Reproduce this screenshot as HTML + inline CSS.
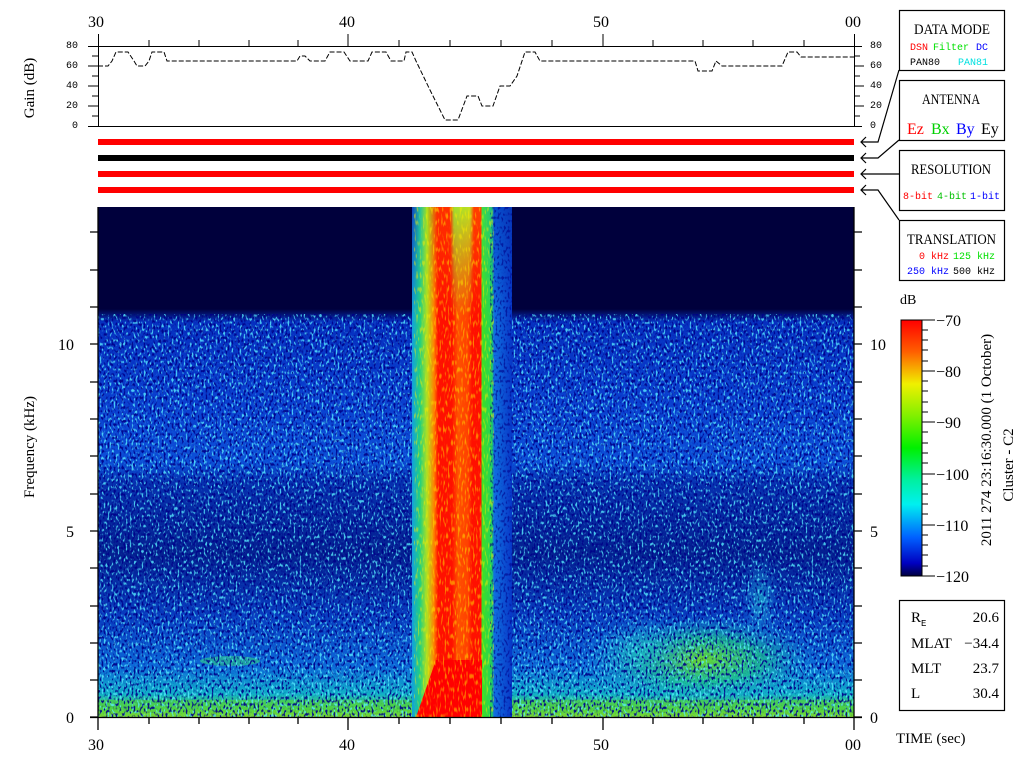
<!DOCTYPE html>
<html><head><meta charset="utf-8"><style>
html,body{margin:0;padding:0;background:#fff;width:1024px;height:768px;overflow:hidden}
svg{display:block}
text{font-family:"Liberation Serif","DejaVu Serif",serif}
.m text, text.m{font-family:"Liberation Mono","DejaVu Sans Mono",monospace}
</style></head><body>
<svg width="1024" height="768" viewBox="0 0 1024 768" xmlns="http://www.w3.org/2000/svg">
<defs>
<linearGradient id="bg" x1="0" y1="207" x2="0" y2="717" gradientUnits="userSpaceOnUse">
<stop offset="0" stop-color="#00003c"/>
<stop offset="0.2" stop-color="#00003c"/>
<stop offset="0.225" stop-color="#0630c0"/>
<stop offset="0.38" stop-color="#0a40d0"/>
<stop offset="0.50" stop-color="#0c50d8"/>
<stop offset="0.54" stop-color="#0630b0"/>
<stop offset="0.68" stop-color="#042090"/>
<stop offset="0.80" stop-color="#083cc0"/>
<stop offset="0.90" stop-color="#0c68d8"/>
<stop offset="0.955" stop-color="#10b0c8"/>
<stop offset="0.985" stop-color="#50d840"/>
<stop offset="1" stop-color="#c0e020"/>
</linearGradient>
<linearGradient id="burst" x1="412" y1="0" x2="512" y2="0" gradientUnits="userSpaceOnUse">
<stop offset="0" stop-color="#10a0e0"/>
<stop offset="0.08" stop-color="#20d080"/>
<stop offset="0.15" stop-color="#b0e020"/>
<stop offset="0.22" stop-color="#ff8000"/>
<stop offset="0.26" stop-color="#ff1000"/>
<stop offset="0.40" stop-color="#ff1000"/>
<stop offset="0.46" stop-color="#ff5000"/>
<stop offset="0.56" stop-color="#ff4000"/>
<stop offset="0.60" stop-color="#ff1000"/>
<stop offset="0.69" stop-color="#ff1000"/>
<stop offset="0.70" stop-color="#40e020"/>
<stop offset="0.80" stop-color="#20d060"/>
<stop offset="0.82" stop-color="#1070e0"/>
<stop offset="1" stop-color="#0838c8"/>
</linearGradient>
<linearGradient id="bursttop" x1="412" y1="0" x2="512" y2="0" gradientUnits="userSpaceOnUse">
<stop offset="0" stop-color="#1040c0"/>
<stop offset="0.08" stop-color="#20c0a0"/>
<stop offset="0.15" stop-color="#a0e020"/>
<stop offset="0.25" stop-color="#ff3000"/>
<stop offset="0.38" stop-color="#ff3000"/>
<stop offset="0.42" stop-color="#a0e030"/>
<stop offset="0.58" stop-color="#c0e020"/>
<stop offset="0.62" stop-color="#ff4000"/>
<stop offset="0.69" stop-color="#ff4000"/>
<stop offset="0.70" stop-color="#40e040"/>
<stop offset="0.80" stop-color="#20c080"/>
<stop offset="0.82" stop-color="#0850d0"/>
<stop offset="1" stop-color="#0838b8"/>
</linearGradient>
<linearGradient id="bv" x1="0" y1="207" x2="0" y2="317" gradientUnits="userSpaceOnUse">
<stop offset="0" stop-color="#fff" stop-opacity="0"/>
<stop offset="1" stop-color="#fff" stop-opacity="1"/>
</linearGradient>
<mask id="bm"><rect x="412" y="207" width="100" height="110" fill="url(#bv)"/></mask>
<radialGradient id="blob" cx="0.5" cy="0.5" r="0.5">
<stop offset="0" stop-color="#70e020" stop-opacity="0.95"/>
<stop offset="0.5" stop-color="#20d080" stop-opacity="0.7"/>
<stop offset="1" stop-color="#10a0e0" stop-opacity="0"/>
</radialGradient>
<radialGradient id="blob2" cx="0.5" cy="0.5" r="0.5">
<stop offset="0" stop-color="#20c0d0" stop-opacity="0.7"/>
<stop offset="1" stop-color="#1070e0" stop-opacity="0"/>
</radialGradient>
<linearGradient id="cb" x1="0" y1="320" x2="0" y2="576" gradientUnits="userSpaceOnUse">
<stop offset="0" stop-color="#ff0000"/>
<stop offset="0.125" stop-color="#ff6000"/>
<stop offset="0.25" stop-color="#f0f000"/>
<stop offset="0.375" stop-color="#80f000"/>
<stop offset="0.5" stop-color="#00f000"/>
<stop offset="0.625" stop-color="#00f0a0"/>
<stop offset="0.72" stop-color="#00f0f0"/>
<stop offset="0.85" stop-color="#0060ff"/>
<stop offset="0.95" stop-color="#0000c0"/>
<stop offset="1" stop-color="#000040"/>
</linearGradient>
<filter id="spk" x="0" y="0" width="100%" height="100%">
<feTurbulence type="fractalNoise" baseFrequency="0.5 0.28" numOctaves="1" seed="3"/>
<feColorMatrix type="matrix" values="0 0 0 0 0.1  0 0 0 0 0.85  0 0 0 0 1  6 0 0 0 -3.2"/>
</filter>
<filter id="dspk" x="0" y="0" width="100%" height="100%">
<feTurbulence type="fractalNoise" baseFrequency="0.5 0.3" numOctaves="1" seed="9"/>
<feColorMatrix type="matrix" values="0 0 0 0 0  0 0 0 0 0  0 0 0 0 0.25  0 6 0 0 -3.1"/>
</filter>
<filter id="yspk" x="0" y="0" width="100%" height="100%">
<feTurbulence type="fractalNoise" baseFrequency="0.6 0.15" numOctaves="1" seed="5"/>
<feColorMatrix type="matrix" values="0 0 0 0 1  0 0 0 0 0.85  0 0 0 0 0  6 0 0 0 -3.2"/>
</filter>
<clipPath id="noiseclip"><rect x="98" y="314" width="756" height="403"/><rect x="490" y="207" width="22" height="110"/></clipPath>
</defs>

<!-- spectrogram -->
<rect x="98" y="207" width="756" height="510" fill="url(#bg)"/>
<ellipse cx="700" cy="660" rx="120" ry="45" fill="url(#blob)"/>
<ellipse cx="640" cy="650" rx="60" ry="40" fill="url(#blob2)"/>
<ellipse cx="760" cy="600" rx="20" ry="50" fill="url(#blob2)"/>
<ellipse cx="230" cy="661" rx="30" ry="5" fill="#30d080" opacity="0.6"/>
<rect x="98" y="700" width="756" height="17" fill="#50d040" opacity="0.6"/>
<g clip-path="url(#noiseclip)">
<rect x="98" y="207" width="756" height="510" filter="url(#spk)" opacity="0.8"/>
<rect x="98" y="207" width="756" height="510" filter="url(#dspk)" opacity="0.9"/>
</g>
<rect x="412" y="207" width="100" height="110" fill="url(#bursttop)"/>
<rect x="412" y="317" width="100" height="400" fill="url(#burst)"/>
<rect x="412" y="207" width="100" height="110" fill="url(#burst)" mask="url(#bm)"/>
<polygon points="436,660 482,660 482,717 416,717" fill="#ff0000"/>
<rect x="414" y="207" width="80" height="510" filter="url(#yspk)" opacity="0.5"/>
<rect x="490" y="207" width="22" height="510" filter="url(#dspk)" opacity="0.6"/>

<!-- spectrogram axes -->
<g stroke="#000" stroke-width="1.3" fill="none">
<line x1="98" y1="207" x2="98" y2="718"/>
<line x1="854" y1="207" x2="854" y2="718"/>
<line x1="90" y1="717.5" x2="862" y2="717.5"/>
<path d="M90 717H98M90 680H98M90 643H98M90 606H98M90 568H98M90 531H98M90 494H98M90 456H98M90 419H98M90 382H98M90 344H98M90 307H98M90 270H98M90 232H98"/>
<path d="M854 717H862M854 680H862M854 643H862M854 606H862M854 568H862M854 531H862M854 494H862M854 456H862M854 419H862M854 382H862M854 344H862M854 307H862M854 270H862M854 232H862"/>
<path d="M98 717V730M149 717V724M199 717V724M249 717V724M298 717V724M348 717V730M399 717V724M450 717V724M501 717V724M552 717V724M603 717V730M653 717V724M703 717V724M753 717V724M804 717V724M854 717V730"/>
</g>
<g font-size="16" fill="#000">
<text x="66" y="723">0</text><text x="66" y="537">5</text><text x="58" y="350">10</text>
<text x="870" y="723">0</text><text x="870" y="537">5</text><text x="870" y="350">10</text>
<text x="88" y="750">30</text><text x="339" y="750">40</text><text x="593" y="750">50</text><text x="845" y="750">00</text>
<text x="88" y="27">30</text><text x="339" y="27">40</text><text x="593" y="27">50</text><text x="845" y="27">00</text>
<text x="896" y="743" font-size="15">TIME (sec)</text>
</g>
<text transform="translate(34,447) rotate(-90)" text-anchor="middle" font-size="15">Frequency (kHz)</text>
<text transform="translate(34,88) rotate(-90)" text-anchor="middle" font-size="15">Gain (dB)</text>

<!-- gain panel -->
<g stroke="#000" stroke-width="1" fill="none">
<line x1="88" y1="46.5" x2="862" y2="46.5"/>
<line x1="88" y1="126.5" x2="862" y2="126.5"/>
<line x1="98.5" y1="34" x2="98.5" y2="127"/>
<line x1="854.5" y1="34" x2="854.5" y2="127"/>
<path d="M149 40V46M199 40V46M249 40V46M298 40V46M348 34V46M399 40V46M450 40V46M501 40V46M552 40V46M603 34V46M653 40V46M703 40V46M753 40V46M804 40V46"/>
<path d="M92 56H98M88 66H98M92 76H98M88 86H98M92 96H98M88 106H98M92 116H98"/>
<path d="M854 56H860M854 66H864M854 76H860M854 86H864M854 96H860M854 106H864M854 116H860"/>
<polyline stroke-dasharray="5 2" points="98,66 108,66 112,61 116,52 128,52 134,61 137,66 145,66 149,61 152,52 164,52 167,61 297,61 300,56 305,56 310,61 325,61 330,52 344,52 350,61 368,61 372,52 386,52 391,61 404,61 406,52 412,52 416,61 430,90 445,120 458,120 467,96 478,96 482,106 493,106 500,86 510,86 517,76 525,52 535,52 540,61 695,61 698,71 712,71 716,61 722,66 782,66 788,52 797,52 801,57 854,57"/>
</g>
<g class="m" font-size="10" fill="#000">
<text x="66" y="48">80</text><text x="66" y="68">60</text><text x="66" y="88">40</text><text x="66" y="108">20</text><text x="72" y="128">0</text>
<text x="870" y="48">80</text><text x="870" y="68">60</text><text x="870" y="88">40</text><text x="870" y="108">20</text><text x="870" y="128">0</text>
</g>

<!-- mode bars -->
<rect x="98" y="139" width="756" height="6" fill="#ff0000"/>
<rect x="98" y="155" width="756" height="6" fill="#000"/>
<rect x="98" y="171" width="756" height="6" fill="#ff0000"/>
<rect x="98" y="187" width="756" height="6" fill="#ff0000"/>

<!-- right boxes -->
<g stroke="#000" stroke-width="1.2" fill="none">
<rect x="899.5" y="10.5" width="105" height="60"/>
<rect x="899.5" y="80.5" width="105" height="60"/>
<rect x="899.5" y="150.5" width="105" height="60"/>
<rect x="899.5" y="220.5" width="105" height="60"/>
<path d="M899 70L878 142H861M866 137L861 142L866 147"/>
<path d="M899 140L878 158H861M866 153L861 158L866 163"/>
<path d="M899 174H861M866 169L861 174L866 179"/>
<path d="M899 220L878 190H861M866 185L861 190L866 195"/>
</g>
<g font-size="15" fill="#000">
<text x="914" y="34" textLength="76" lengthAdjust="spacingAndGlyphs">DATA MODE</text>
<text x="922" y="104" textLength="58" lengthAdjust="spacingAndGlyphs">ANTENNA</text>
<text x="911" y="174" textLength="80" lengthAdjust="spacingAndGlyphs">RESOLUTION</text>
<text x="907" y="244" textLength="89" lengthAdjust="spacingAndGlyphs">TRANSLATION</text>
</g>
<g class="m" font-size="10">
<text x="910" y="50" fill="#ff0000">DSN</text><text x="933" y="50" fill="#00e000">Filter</text><text x="976" y="50" fill="#0000ff">DC</text>
<text x="910" y="65" fill="#000">PAN80</text><text x="958" y="65" fill="#00e0e0">PAN81</text>
<text x="903" y="199" fill="#ff0000" textLength="30">8-bit</text><text x="937" y="199" fill="#00c000" textLength="30">4-bit</text><text x="970" y="199" fill="#0000ff" textLength="30">1-bit</text>
<text x="919" y="259" fill="#ff0000">0 kHz</text><text x="953" y="259" fill="#00e000">125 kHz</text>
<text x="907" y="274" fill="#0000ff">250 kHz</text><text x="953" y="274" fill="#000">500 kHz</text>
</g>
<g font-size="16">
<text x="907" y="134" fill="#ff0000">Ez</text><text x="931" y="134" fill="#00d000">Bx</text><text x="956" y="134" fill="#0000ff">By</text><text x="981" y="134" fill="#000">Ey</text>
</g>

<!-- colorbar -->
<text x="900" y="304" font-size="14">dB</text>
<rect x="901" y="320" width="21" height="256" fill="url(#cb)" stroke="#000" stroke-width="1"/>
<g stroke="#000" stroke-width="1">
<path d="M922 320H935M922 371H935M922 422H935M922 474H935M922 525H935M922 576H935M922 330H928M922 340H928M922 350H928M922 361H928M922 381H928M922 391H928M922 402H928M922 412H928M922 432H928M922 443H928M922 453H928M922 463H928M922 484H928M922 494H928M922 504H928M922 514H928M922 535H928M922 545H928M922 555H928M922 566H928"/>
</g>
<g font-size="16">
<text x="936" y="326">−70</text><text x="936" y="377">−80</text><text x="936" y="428">−90</text><text x="936" y="480">−100</text><text x="936" y="531">−110</text><text x="936" y="582">−120</text>
</g>
<text transform="translate(991,440) rotate(-90)" text-anchor="middle" font-size="15">2011 274 23:16:30.000 (1 October)</text>
<text transform="translate(1013,465) rotate(-90)" text-anchor="middle" font-size="15">Cluster - C2</text>

<!-- info box -->
<rect x="899.5" y="600.5" width="105" height="110" fill="none" stroke="#000" stroke-width="1.2"/>
<g font-size="15">
<text x="911" y="622">R</text><text x="921" y="626" class="m" font-size="9">E</text><text x="999" y="622" text-anchor="end">20.6</text>
<text x="911" y="648">MLAT</text><text x="999" y="648" text-anchor="end">−34.4</text>
<text x="911" y="673">MLT</text><text x="999" y="673" text-anchor="end">23.7</text>
<text x="911" y="698">L</text><text x="999" y="698" text-anchor="end">30.4</text>
</g>
</svg>
</body></html>
